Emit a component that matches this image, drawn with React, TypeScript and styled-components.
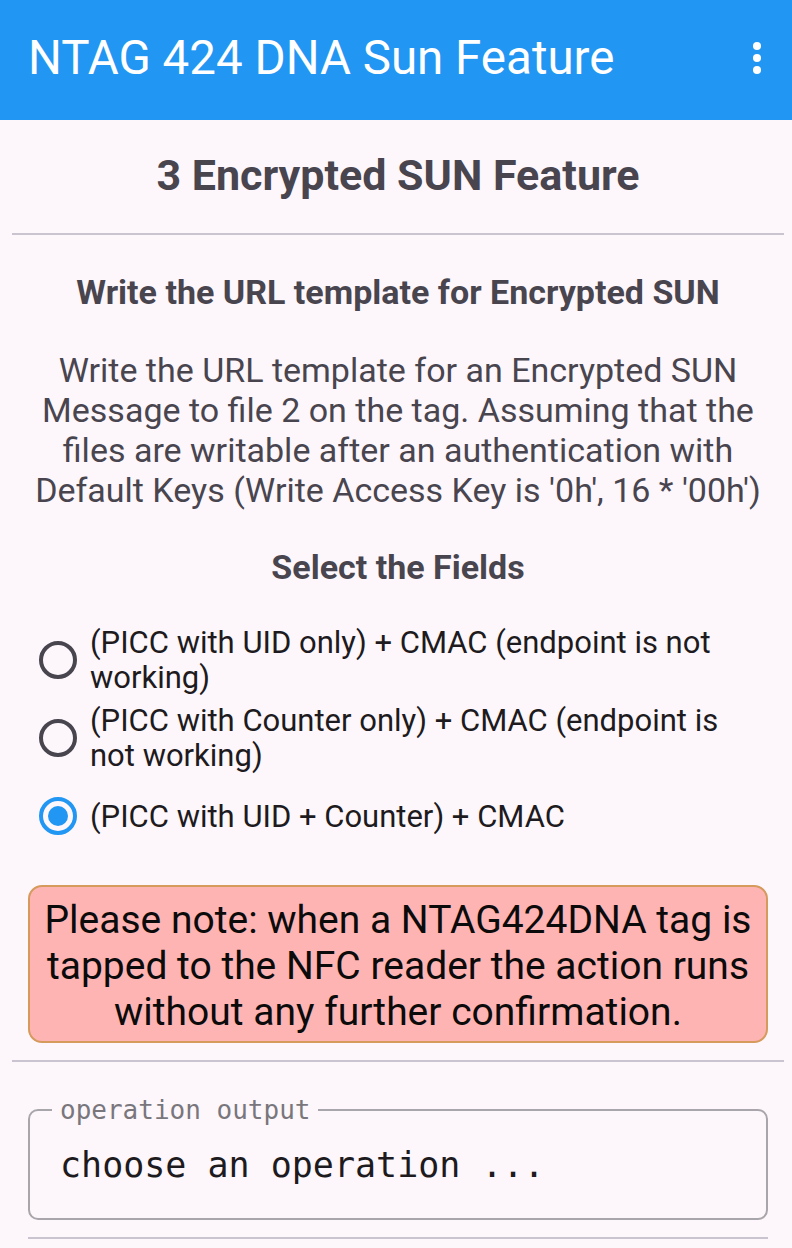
import React from "react";
import styled, { createGlobalStyle } from "styled-components";

const Global = createGlobalStyle`
  html, body { margin: 0; padding: 0; background: #fdf7fc; }
  body { font-family: Roboto, "Noto Sans", sans-serif; }
  * { box-sizing: border-box; }
`;

const Page = styled.div`
  width: 792px;
  min-height: 1248px;
  background: #fdf7fc;
  display: flex;
  flex-direction: column;
  overflow: hidden;
`;

const AppBar = styled.header`
  height: 120px;
  background: #2196f3;
  display: flex;
  align-items: center;
  justify-content: space-between;
  padding: 0 31px 0 28px;
  flex-shrink: 0;
`;

const AppTitle = styled.h1`
  margin: 0;
  font-family: Roboto, sans-serif;
  font-weight: 400;
  font-size: 47.5px;
  line-height: 56px;
  color: #ffffff;
  padding-bottom: 4px;
`;

const Kebab = styled.div`
  display: flex;
  flex-direction: column;
  gap: 4px;
  padding-bottom: 4px;
`;

const Dot = styled.span`
  width: 8px;
  height: 8px;
  border-radius: 50%;
  background: #ffffff;
`;

const Content = styled.main`
  display: flex;
  flex-direction: column;
  padding: 0 8px 0 12px;
`;

const PageHeading = styled.h2`
  margin: 0;
  height: 113px;
  padding-bottom: 4px;
  display: flex;
  align-items: center;
  justify-content: center;
  font-weight: 700;
  font-size: 43px;
  color: #49454f;
`;

const Divider = styled.hr<{ $inset?: boolean }>`
  margin: 0 ${(p) => (p.$inset ? "16px" : "0")};
  border: none;
  height: 2px;
  flex-shrink: 0;
  background: #cac4d0;
`;

const Section = styled.section`
  display: flex;
  flex-direction: column;
  align-items: center;
  padding: 37px 18px 0;
  color: #49454f;
`;

const SubHeading = styled.h3<{ $gap?: number }>`
  margin: ${(p) => p.$gap ?? 0}px 0 0;
  font-weight: 700;
  font-size: 34px;
  line-height: 40px;
  text-align: center;
`;

const Paragraph = styled.p`
  margin: 38px 0 0;
  font-size: 34px;
  line-height: 40px;
  text-align: center;
`;

const RadioGroup = styled.div`
  align-self: stretch;
  display: flex;
  flex-direction: column;
  padding: 34px 16px 0 9px;
`;

const RadioRow = styled.label<{ $pad: number }>`
  display: flex;
  align-items: center;
  gap: 13px;
  padding: ${(p) => p.$pad}px 0;
  color: #1d1b20;
  font-size: 31px;
  line-height: 35px;
`;

const RadioCircle = styled.span<{ $checked?: boolean }>`
  flex-shrink: 0;
  width: 38px;
  height: 38px;
  border-radius: 50%;
  border: 4px solid ${(p) => (p.$checked ? "#2196f3" : "#49454f")};
  display: flex;
  align-items: center;
  justify-content: center;
  &::after {
    content: "";
    display: ${(p) => (p.$checked ? "block" : "none")};
    width: 20px;
    height: 20px;
    border-radius: 50%;
    background: #2196f3;
  }
`;

const Note = styled.div`
  margin: 30px 16px 17px;
  background: #ffb4b4;
  border: 2px solid #d59a5c;
  border-radius: 14px;
  padding: 10px 12px 6px;
  text-align: center;
  font-size: 39px;
  line-height: 46px;
  color: #0b0b0b;
`;

const Output = styled.fieldset`
  margin: 33px 16px 17px;
  border: 2px solid #a9a6ab;
  border-radius: 10px;
  padding: 20px 30px 32px;
`;

const OutputLegend = styled.legend`
  padding: 0 8px;
  margin-left: -8px;
  font-family: "DejaVu Sans Mono", monospace;
  font-size: 26px;
  line-height: 30px;
  color: #79767c;
`;

const OutputText = styled.div`
  font-family: "DejaVu Sans Mono", monospace;
  font-size: 35px;
  line-height: 41px;
  color: #1d1b20;
`;

const options = [
  { label: "(PICC with UID only) + CMAC (endpoint is not working)", checked: false, pad: 4 },
  { label: "(PICC with Counter only) + CMAC (endpoint is not working)", checked: false, pad: 4 },
  { label: "(PICC with UID + Counter) + CMAC", checked: true, pad: 20 },
];

export default function App() {
  return (
    <Page>
      <Global />
      <AppBar>
        <AppTitle>NTAG 424 DNA Sun Feature</AppTitle>
        <Kebab>
          <Dot />
          <Dot />
          <Dot />
        </Kebab>
      </AppBar>
      <Content>
        <PageHeading>3 Encrypted SUN Feature</PageHeading>
        <Divider />
        <Section>
          <SubHeading>Write the URL template for Encrypted SUN</SubHeading>
          <Paragraph>
            Write the URL template for an Encrypted SUN Message to file 2 on the tag. Assuming that the
            files are writable after an authentication with Default Keys (Write Access Key is '0h', 16 *
            '00h')
          </Paragraph>
          <SubHeading $gap={37}>Select the Fields</SubHeading>
          <RadioGroup>
            {options.map((o) => (
              <RadioRow key={o.label} $pad={o.pad}>
                <RadioCircle $checked={o.checked} />
                <span>{o.label}</span>
              </RadioRow>
            ))}
          </RadioGroup>
        </Section>
        <Note>
          Please note: when a NTAG424DNA tag is tapped to the NFC reader the action runs without any
          further confirmation.
        </Note>
        <Divider />
        <Output>
          <OutputLegend>operation output</OutputLegend>
          <OutputText>choose an operation ...</OutputText>
        </Output>
        <Divider $inset />
      </Content>
    </Page>
  );
}
